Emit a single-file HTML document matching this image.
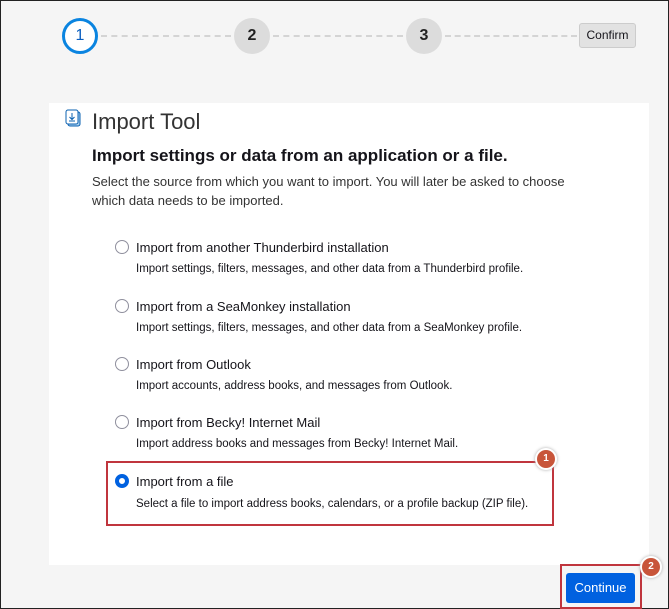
<!DOCTYPE html>
<html><head><style>
*{margin:0;padding:0;box-sizing:border-box}
body{width:669px;height:609px;background:#f5f5f5;font-family:"Liberation Sans",sans-serif;color:#15141a;position:relative;overflow:hidden;border:1px solid #222;}
.a{position:absolute}
.c{position:absolute;border-radius:50%;width:36px;height:36px;text-align:center;line-height:36px;font-size:16px;font-weight:bold;background:#dcdcdc;color:#222}
.dash{position:absolute;top:34px;height:0;border-top:2px dashed #d4d4d4}
.card{position:absolute;left:48px;top:102px;width:600px;height:462px;background:#fff}
.r{position:absolute;left:114px;width:14px;height:14px;border:1.5px solid #8f8f9d;border-radius:50%;background:#fff}
.l{position:absolute;left:135px;font-size:13px;white-space:nowrap}
.s{position:absolute;left:135px;font-size:11.5px;white-space:nowrap}
.b{position:absolute;width:18px;height:18px;border-radius:50%;background:#c8553a;color:#fff;font-size:10px;font-weight:bold;text-align:center;line-height:18px;box-shadow:0 0 0 2px #fff,0 0 3px 2px #aaa}
</style></head><body>
<div class="dash" style="left:100px;width:130px"></div>
<div class="dash" style="left:272px;width:130px"></div>
<div class="dash" style="left:444px;width:132px"></div>
<div class="c" style="left:61px;top:17px;background:#fff;border:3px solid #0a84e0;line-height:30px;font-weight:normal;color:#0a5fc0">1</div>
<div class="c" style="left:233px;top:17px">2</div>
<div class="c" style="left:405px;top:17px">3</div>
<div class="a" style="left:578px;top:22px;width:57px;height:25px;background:#e2e2e2;border:1px solid #ccc;border-radius:3px;font-size:12px;text-align:center;line-height:23px">Confirm</div>
<div class="card"></div>
<svg class="a" style="left:64px;top:108px" width="16" height="18" viewBox="0 0 16 18"><rect x="3" y="3" width="12" height="14" rx="2" fill="#a8d0f0" stroke="#0a60b0"/><rect x="1" y="1" width="12" height="14" rx="2" fill="#fff" stroke="#0a60b0"/><path d="M7 4v6M4.5 8l2.5 2.5L9.5 8M4 12h6" stroke="#0a60b0" fill="none"/></svg>
<div class="a" style="left:91px;top:108px;font-size:22px;font-weight:300;color:#333">Import Tool</div>
<div class="a" style="left:91px;top:145px;font-size:17px;font-weight:bold">Import settings or data from an application or a file.</div>
<div class="a" style="left:91px;top:171px;font-size:13px;line-height:19px;width:500px;color:#333">Select the source from which you want to import. You will later be asked to choose which data needs to be imported.</div>
<div class="r" style="top:239px"></div><div class="l" style="top:239px">Import from another Thunderbird installation</div>
<div class="s" style="top:262px">Import settings, filters, messages, and other data from a Thunderbird profile.</div>
<div class="r" style="top:298px"></div><div class="l" style="top:298px">Import from a SeaMonkey installation</div>
<div class="s" style="top:321px">Import settings, filters, messages, and other data from a SeaMonkey profile.</div>
<div class="r" style="top:356px"></div><div class="l" style="top:356px">Import from Outlook</div>
<div class="s" style="top:379px">Import accounts, address books, and messages from Outlook.</div>
<div class="r" style="top:414px"></div><div class="l" style="top:414px">Import from Becky! Internet Mail</div>
<div class="s" style="top:437px">Import address books and messages from Becky! Internet Mail.</div>
<div class="a" style="left:105px;top:460px;width:448px;height:65px;border:2px solid #c0353d"></div>
<div class="r" style="top:473px;border:4px solid #0061e0"></div><div class="l" style="top:473px">Import from a file</div>
<div class="s" style="top:497px">Select a file to import address books, calendars, or a profile backup (ZIP file).</div>
<div class="b" style="left:536px;top:449px">1</div>
<div class="a" style="left:559px;top:563px;width:82px;height:45px;border:2px solid #c0353d"></div>
<div class="a" style="left:565px;top:572px;width:69px;height:30px;background:#0061e0;border-radius:3px;color:#fff;font-size:13px;text-align:center;line-height:30px">Continue</div>
<div class="b" style="left:641px;top:557px">2</div>
</body></html>
